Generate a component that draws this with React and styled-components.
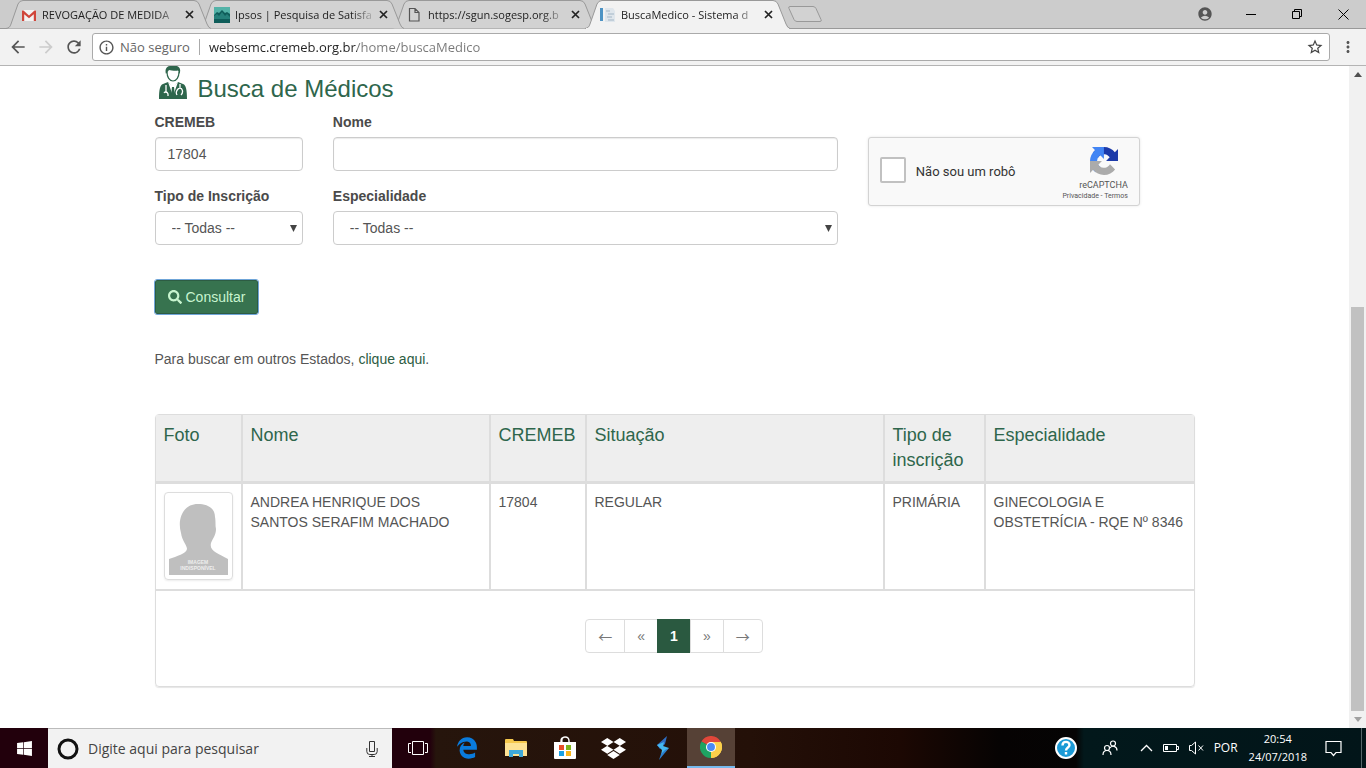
import React from "react";
import styled, { createGlobalStyle } from "styled-components";
import {
  MdAccountCircle,
  MdArrowBack,
  MdArrowForward,
  MdInfoOutline,
  MdMoreVert,
  MdRefresh,
  MdStarBorder,
} from "react-icons/md";
import { FaDropbox, FaEdgeLegacy, FaSearch, FaWindows } from "react-icons/fa";

const tabs = [
  { title: "REVOGAÇÃO DE MEDIDA", icon: GmailIcon },
  { title: "Ipsos | Pesquisa de Satisfa", icon: IpsosIcon },
  { title: "https://sgun.sogesp.org.b", icon: PageIcon },
  { title: "BuscaMedico - Sistema d", icon: ReportIcon, active: true },
];

const doctors = [
  {
    name: "ANDREA HENRIQUE DOS SANTOS SERAFIM MACHADO",
    cremeb: "17804",
    status: "REGULAR",
    type: "PRIMÁRIA",
    specialty: "GINECOLOGIA E OBSTETRÍCIA - RQE Nº 8346",
  },
];

function App() {
  return (
    <Screen>
      <GlobalStyle />
      <TabStrip />
      <AddressBar />
      <Viewport>
        <Page>
          <Container>
            <Heading>
              <DoctorIcon />
              <h1>Busca de Médicos</h1>
            </Heading>
            <SearchForm />
            <Hint>
              Para buscar em outros Estados, <a href="#">clique aqui</a>.
            </Hint>
            <Results />
          </Container>
        </Page>
        <Scrollbar>
          <svg width="17" height="17"><path d="M5 11h8l-4-5z" fill="#505050" /></svg>
          <Thumb />
          <svg width="17" height="17"><path d="M5 6h8l-4 5z" fill="#a0a0a0" /></svg>
        </Scrollbar>
      </Viewport>
      <Taskbar />
    </Screen>
  );
}

export default App;

function TabStrip() {
  return (
    <Strip>
      {tabs.map((tab, i) => (
        <Tab key={tab.title} $order={tab.active ? 10 : tabs.length - i}>
          <TabShape viewBox="0 0 206 29">
            <path
              d="M0 28.5C3 28 4 27 5 24L12 4Q13.5.5 17 .5H188Q191.500.5 193 4L201 24Q202.500 28 205 28.5"
              fill={tab.active ? "#f2f2f2" : "#d2d2d2"}
              stroke="#999"
            />
            {tab.active && <path d="M1 28.5H204" stroke="#f2f2f2" />}
          </TabShape>
          <tab.icon />
          <TabTitle href="#">{tab.title}</TabTitle>
          <TabClose aria-label="Fechar guia">
            <svg width="9" height="9">
              <path d="M1 1l7 7M8 1L1 8" stroke="#222" strokeWidth="1.7" />
            </svg>
          </TabClose>
        </Tab>
      ))}
      <NewTab aria-label="Nova guia">
        <svg width="37" height="18">
          <path d="M3 1.500h23q2 0 3 2l5 11q1 2-1 2H10q-2 0-3-2L2 3.500q-1-2 1-2z" fill="#d2d2d2" stroke="#999" />
        </svg>
      </NewTab>
      <WindowButtons>
        <button aria-label="Usuário"><MdAccountCircle size={16} color="#555" /></button>
        <button aria-label="Minimizar">
          <svg width="11" height="11"><path d="M0 5.500h10" stroke="#000" /></svg>
        </button>
        <button aria-label="Restaurar">
          <svg width="11" height="11" fill="none" stroke="#000">
            <path d="M.5 2.500h7v7h-7zM2.500 2.500v-2h7v7h-2" />
          </svg>
        </button>
        <button aria-label="Fechar">
          <svg width="11" height="11"><path d="M.5.5l10 10M10.500.5l-10 10" stroke="#000" /></svg>
        </button>
      </WindowButtons>
    </Strip>
  );
}

function AddressBar() {
  return (
    <Toolbar>
      <ToolButton aria-label="Voltar"><MdArrowBack size={20} /></ToolButton>
      <ToolButton aria-label="Avançar" disabled><MdArrowForward size={20} /></ToolButton>
      <ToolButton aria-label="Recarregar"><MdRefresh size={20} /></ToolButton>
      <Omnibox>
        <MdInfoOutline size={17} color="#555" />
        <span>Não seguro</span>
        <Divider />
        <UrlInput aria-label="Endereço" defaultValue="websemc.cremeb.org.br/home/buscaMedico" />
        <MdStarBorder size={18} color="#444" />
      </Omnibox>
      <ToolButton aria-label="Menu"><MdMoreVert size={18} /></ToolButton>
    </Toolbar>
  );
}

function SearchForm() {
  return (
    <Form onSubmit={(e) => e.preventDefault()}>
      <Field $span={2}>
        <label htmlFor="cremeb">CREMEB</label>
        <Input id="cremeb" defaultValue="17804" />
      </Field>
      <Field $span={6}>
        <label htmlFor="nome">Nome</label>
        <Input id="nome" />
      </Field>
      <CaptchaCell>
        <Captcha>
          <Check type="checkbox" id="robo" />
          <label htmlFor="robo">Não sou um robô</label>
          <CaptchaBrand>
            <RecaptchaIcon />
            <span>reCAPTCHA</span>
            <small><a href="#">Privacidade</a> - <a href="#">Termos</a></small>
          </CaptchaBrand>
        </Captcha>
      </CaptchaCell>
      <Field $span={2}>
        <label htmlFor="tipo">Tipo de Inscrição</label>
        <Select id="tipo"><option>-- Todas --</option></Select>
      </Field>
      <Field $span={6}>
        <label htmlFor="especialidade">Especialidade</label>
        <Select id="especialidade"><option>-- Todas --</option></Select>
      </Field>
      <Submit type="submit">
        <FaSearch size={14} />
        Consultar
      </Submit>
    </Form>
  );
}

function Results() {
  return (
    <Table>
      <colgroup>
        <col width="85" />
        <col width="248" />
        <col width="96" />
        <col />
        <col width="101" />
        <col width="210" />
      </colgroup>
      <thead>
        <tr>
          <th>Foto</th>
          <th>Nome</th>
          <th>CREMEB</th>
          <th>Situação</th>
          <th>Tipo de inscrição</th>
          <th>Especialidade</th>
        </tr>
      </thead>
      <tbody>
        {doctors.map((d) => (
          <tr key={d.cremeb}>
            <td><Photo><Silhouette /></Photo></td>
            <td>{d.name}</td>
            <td>{d.cremeb}</td>
            <td>{d.status}</td>
            <td>{d.type}</td>
            <td>{d.specialty}</td>
          </tr>
        ))}
      </tbody>
      <tfoot>
        <tr>
          <td colSpan="6">
            <Pagination>
              <PageLink href="#">←</PageLink>
              <PageLink href="#">«</PageLink>
              <PageLink href="#" $current>1</PageLink>
              <PageLink href="#">»</PageLink>
              <PageLink href="#">→</PageLink>
            </Pagination>
          </td>
        </tr>
      </tfoot>
    </Table>
  );
}

function Taskbar() {
  return (
    <Bar>
      <TaskButton aria-label="Iniciar"><FaWindows size={17} /></TaskButton>
      <TaskSearch>
        <svg width="22" height="22"><circle cx="11" cy="11" r="9" fill="none" stroke="#111" strokeWidth="3" /></svg>
        <input aria-label="Pesquisar" placeholder="Digite aqui para pesquisar" />
        <svg width="12" height="18" fill="none" stroke="#333">
          <path d="M3.500 1.500h5v10h-5zM.8 8v3.500q0 3 3 3h4.400q3 0 3-3V8M6 14.500v2M3 16.500h6" />
        </svg>
      </TaskSearch>
      <TaskButton aria-label="Visão de tarefas">
        <svg width="20" height="16" fill="none" stroke="#fff">
          <path d="M4.500 1.500h11v13h-11zM3 3.500H.5v9H3M17 3.500h2.500v9H17" />
        </svg>
      </TaskButton>
      <TaskButton aria-label="Edge"><FaEdgeLegacy size={22} color="#0a7bdc" /></TaskButton>
      <TaskButton aria-label="Explorador de arquivos"><FolderIcon /></TaskButton>
      <TaskButton aria-label="Loja"><StoreIcon /></TaskButton>
      <TaskButton aria-label="Dropbox"><FaDropbox size={25} /></TaskButton>
      <TaskButton aria-label="Sincronizar"><BoltIcon /></TaskButton>
      <TaskButton aria-label="Chrome" $running><ChromeIcon /></TaskButton>
      <Tray>
        <button aria-label="Ajuda">
          <svg width="24" height="24" fill="none">
            <circle cx="12" cy="12" r="10" fill="#1b9ad6" stroke="#fff" strokeWidth="2" />
            <path d="M8.500 9.500c0-5 7-4.500 7-.5 0 2.500-3.500 2.500-3.500 5.500M12 16v2.500" stroke="#fff" strokeWidth="2.400" />
          </svg>
        </button>
        <button aria-label="Pessoas">
          <svg width="16" height="16" fill="none" stroke="#fff" strokeWidth="1.200">
            <circle cx="5" cy="8" r="2.500" />
            <path d="M1 15c0-6 8-6 8 0" />
            <circle cx="11" cy="3.500" r="2.500" />
            <path d="M8 8c2-3 7-2 7 2.500" />
          </svg>
        </button>
        <button aria-label="Mostrar ícones ocultos">
          <svg width="13" height="8" fill="none" stroke="#fff" strokeWidth="1.300"><path d="M1 7l5.500-5.500L12 7" /></svg>
        </button>
        <button aria-label="Bateria">
          <svg width="16" height="10" fill="none" stroke="#fff">
            <path d="M.5 1.500h13v7H.5zM14 3.500h1.500v3H14" />
            <path d="M2 3h3v4H2z" fill="#fff" stroke="none" />
          </svg>
        </button>
        <button aria-label="Volume">
          <svg width="15" height="14" fill="none" stroke="#fff">
            <path d="M.5 4.500h2l4-3.500v12l-4-3.500h-2zM9.500 4.500l4.500 5M14 4.500l-4.500 5" />
          </svg>
        </button>
        <button>POR</button>
        <Clock>
          <span>20:54</span>
          <span>24/07/2018</span>
        </Clock>
        <button aria-label="Notificações">
          <svg width="17" height="17" fill="none" stroke="#fff" strokeWidth="1.200">
            <path d="M1 1.500h15v11h-5l-2.500 3-2.500-3H1z" />
          </svg>
        </button>
      </Tray>
    </Bar>
  );
}

function GmailIcon() {
  return (
    <svg width="16" height="16">
      <path d="M1 3h14v11H1z" fill="#f3f3f3" />
      <path d="M1 14V3.500h1.500L8 8.500l5.500-5H15V14h-2.200V7.200L8 11.300 3.200 7.200V14z" fill="#d0463b" />
    </svg>
  );
}

function IpsosIcon() {
  return (
    <svg width="16" height="16">
      <path d="M0 0h16v16H0z" fill="#0f5d5a" />
      <path d="M0 0h16v7l-3-2-2 1-3-3-3 3-2-1-3 3z" fill="#54b3a8" />
      <path d="M0 9l3-2 2 2 3-4 3 4 2-2 3 3v2H0z" fill="#25807a" />
    </svg>
  );
}

function PageIcon() {
  return (
    <svg width="16" height="16" fill="none" stroke="#555" strokeWidth="1.200">
      <path d="M2.500 1.500h5.500l4 4v8.500h-9.500zM8 1.500v4h4" />
    </svg>
  );
}

function ReportIcon() {
  return (
    <svg width="16" height="16">
      <path d="M0 1h3v13H0z" fill="#4d93c4" />
      <path d="M5 1h8l2 3v11H5z" fill="#dfe6ec" />
      <path d="M6 4h4M8 7h6M7 10h5M8 13h6" stroke="#a3b6c6" />
    </svg>
  );
}

function DoctorIcon() {
  return (
    <svg width="28" height="33" viewBox="0 0 28 33">
      <path d="M8 6c0 5 2.500 9 6 9s6-4 6-9" fill="#fff" stroke="#2e664c" strokeWidth="1.200" />
      <path d="M7 8C5.500 3 8 0 11 0h7c3 1 4 4 2.500 8L19 4.500c-3 1-7-.5-9-.5z" fill="#2e664c" />
      <path d="M0 33c0-9 1-14 4-15l5-2 5 6 5-6 5 2c3 1 4 6 4 15z" fill="#2e664c" />
      <path d="M9 16l5 14 5-14-5 5z" fill="#fff" />
      <path d="M13 21h2l1 9-2 2-2-2z" fill="#2e664c" />
      <path d="M7 19v8M5 27q2-3 4 1v2M21 18v4M18 29c-2-3 1-7 3-7s4 4 1 7" fill="none" stroke="#fff" strokeWidth="1.300" />
    </svg>
  );
}

function RecaptchaIcon() {
  return (
    <svg width="28" height="28" viewBox="0 0 64 64">
      <path d="M64 31.955l-.033-1.370V4.687l-7.160 7.160C50.948 4.674 42.033.093 32.050.093c-10.400 0-19.622 4.960-25.458 12.640l11.736 11.860a15.550 15.550 0 0 1 4.754-5.334c2.050-1.600 4.952-2.906 8.968-2.906.485 0 .86.057 1.135.163 4.976.393 9.288 3.140 11.828 7.124l-8.307 8.307L64 31.953" fill="#1c3aa9" />
      <path d="M31.862.094l-1.370.033H4.594l7.160 7.160C4.580 13.147 0 22.060 0 32.046c0 10.400 4.960 19.622 12.640 25.458L24.500 45.768a15.550 15.550 0 0 1-5.334-4.754c-1.600-2.050-2.906-4.952-2.906-8.968 0-.485.057-.86.163-1.135.393-4.976 3.140-9.288 7.124-11.828l8.307 8.307L31.860.095" fill="#4285f4" />
      <path d="M.001 32.045l.033 1.370v25.898l7.160-7.160c5.860 7.173 14.774 11.754 24.760 11.754 10.400 0 19.622-4.960 25.458-12.640l-11.736-11.860a15.550 15.550 0 0 1-4.754 5.334c-2.050 1.600-4.952 2.906-8.968 2.906-.485 0-.86-.057-1.135-.163-4.976-.393-9.288-3.140-11.828-7.124l8.307-8.307L0 32.047" fill="#ababab" />
    </svg>
  );
}

function Silhouette() {
  return (
    <svg width="59" height="78" viewBox="0 0 59 78">
      <path d="M0 78V62c8-3 17-5 18-10 0-4-5-8-6-16-4-14 2-29 17-29 8 0 17 3 17 13 1 5 0 8 1 12 0 6-3 9-5 14-2 8 7 10 17 16v16z" fill="#bfbfbf" />
      <text x="29" y="67" fontSize="5" fontWeight="bold" textAnchor="middle" fill="#eee">IMAGEM</text>
      <text x="29" y="73" fontSize="5" fontWeight="bold" textAnchor="middle" fill="#eee">INDISPONÍVEL</text>
    </svg>
  );
}

function FolderIcon() {
  return (
    <svg width="22" height="20">
      <path d="M0 2q0-1 1-1h7l1 2h12q1 0 1 1v14H0z" fill="#f5c84c" />
      <path d="M0 5h22v13H0z" fill="#fde294" />
      <path d="M4 19v-7h14v7h-4v-3H8v3z" fill="#3fa9d9" />
    </svg>
  );
}

function StoreIcon() {
  return (
    <svg width="24" height="24">
      <path d="M8 7V5q0-3 2.500-3.500M16 7V5q0-4-4-4t-3 6" fill="none" stroke="#fff" strokeWidth="1.400" />
      <path d="M1 6h22v16q0 1-1 1H2q-1 0-1-1z" fill="#fff" />
      <path d="M6 9h5v5H6z" fill="#e8502a" />
      <path d="M13 9h5v5h-5z" fill="#7fb51b" />
      <path d="M6 15h5v5H6z" fill="#18a0e4" />
      <path d="M13 15h5v5h-5z" fill="#f8b51c" />
    </svg>
  );
}

function BoltIcon() {
  return (
    <svg width="14" height="24">
      <path d="M11 0L1 9l3 4 5-5z" fill="#2f6fc4" />
      <path d="M1 9l7-3-1 4 6 2-8 7 1-5z" fill="#45b8ef" />
      <path d="M13 12L3 24l2-6 4-4z" fill="#2b7fcf" />
    </svg>
  );
}

function ChromeIcon() {
  return (
    <svg width="22" height="22" viewBox="0 0 24 24">
      <path d="M12 12L1.600 6A12 12 0 0 1 22.400 6z" fill="#e0473a" />
      <path d="M12 12l10.400-6A12 12 0 0 1 12 24z" fill="#fcd04b" />
      <path d="M12 12v0L12 24A12 12 0 0 1 1.600 6z" fill="#1ea362" />
      <path d="M12 6.500h10.700A12 12 0 0 1 12 24l5-9z" fill="#fcd04b" />
      <circle cx="12" cy="12" r="5.500" fill="#fff" />
      <circle cx="12" cy="12" r="4.300" fill="#4a8af4" />
    </svg>
  );
}

const GlobalStyle = createGlobalStyle`
  * {
    box-sizing: border-box;
  }

  body {
    margin: 0;
    font-family: "Liberation Sans", Arial, sans-serif;
    font-size: 14px;
    line-height: 20px;
    color: #555;
    background: #fff;
  }

  button, input, select {
    font: inherit;
    color: inherit;
  }

  button {
    display: flex;
    align-items: center;
    justify-content: center;
    padding: 0;
    border: 0;
    background: none;
  }

  a {
    color: #2d5c43;
    text-decoration: none;
  }

  svg {
    display: block;
    flex-shrink: 0;
  }
`;

const Screen = styled.div`
  display: flex;
  flex-direction: column;
  min-height: 100vh;
`;

const Strip = styled.header`
  display: flex;
  height: 29px;
  padding-left: 6px;
  background: #ccc;
  border-bottom: 1px solid #999;
  font-family: "Open Sans", "Noto Sans", sans-serif;
  font-size: 11px;
`;

const Tab = styled.div`
  position: relative;
  z-index: ${(p) => p.$order};
  display: flex;
  align-items: center;
  gap: 5px;
  width: 205px;
  height: 29px;
  margin-right: -12px;
  padding: 0 14px 0 15px;
  color: #222;
`;

const TabShape = styled.svg`
  position: absolute;
  inset: 0;
  z-index: -1;
  width: 206px;
  height: 29px;
  fill: none;
`;

const TabTitle = styled.a`
  flex: 1;
  white-space: nowrap;
  color: #222;
  mask-image: linear-gradient(to right, #000 85%, rgba(0, 0, 0, 0.2));
`;

const TabClose = styled.button`
  width: 16px;
  height: 16px;
`;

const NewTab = styled.button`
  align-self: center;
  margin-left: 9px;
`;

const WindowButtons = styled.div`
  display: flex;
  margin-left: auto;

  button {
    width: 46px;
  }
`;

const Toolbar = styled.div`
  display: flex;
  align-items: center;
  gap: 8px;
  height: 37px;
  padding: 0 8px;
  background: #f2f2f2;
  border-bottom: 1px solid #b4b4b4;
`;

const ToolButton = styled.button`
  width: 20px;
  color: #555;

  &:disabled {
    color: #ccc;
  }
`;

const Omnibox = styled.div`
  display: flex;
  align-items: center;
  flex: 1;
  height: 28px;
  padding: 0 5px;
  gap: 5px;
  background: #fff;
  border: 1px solid #aaa;
  border-radius: 3px;
  font-family: "Open Sans", "Noto Sans", sans-serif;
  font-size: 13px;
  color: #666;
`;

const Divider = styled.span`
  width: 1px;
  height: 16px;
  margin: 0 4px;
  background: #aaa;
`;

/* host part of the address is darker than the path */
const UrlInput = styled.input`
  flex: 1;
  min-width: 0;
  padding: 0;
  border: 0;
  outline: 0;
  background: linear-gradient(to right, #222 148px, #777 148px);
  background-clip: text;
  -webkit-text-fill-color: transparent;
`;

const Viewport = styled.main`
  display: flex;
  flex: 1;
`;

const Page = styled.div`
  flex: 1;
  padding: 0 15px 40px;
`;

const Container = styled.div`
  max-width: 1040px;
  margin: 0 auto;
`;

const Heading = styled.div`
  display: flex;
  align-items: flex-start;
  gap: 11px;
  padding-left: 4px;
  height: 46px;
  color: #2e664c;

  h1 {
    margin: 8px 0 0;
    font-size: 24px;
    line-height: 30px;
    font-weight: 400;
  }
`;

const Form = styled.form`
  display: grid;
  grid-template-columns: repeat(12, 1fr);
  column-gap: 30px;
  row-gap: 15px;
`;

const Field = styled.div`
  grid-column: span ${(p) => p.$span};
  display: flex;
  flex-direction: column;
  gap: 5px;

  label {
    font-weight: 700;
    color: #4a4a4a;
  }
`;

const Input = styled.input`
  width: 100%;
  height: 34px;
  padding: 6px 12px;
  border: 1px solid #ccc;
  border-radius: 4px;
  background: #fff;
  box-shadow: inset 0 1px 1px rgba(0, 0, 0, 0.08);
`;

const arrow = "data:image/svg+xml,%3Csvg xmlns='http://www.w3.org/2000/svg' width='7' height='7'%3E%3Cpath d='M0 0h7L3.500 7z' fill='%23444'/%3E%3C/svg%3E";

const Select = styled.select`
  width: 100%;
  height: 34px;
  padding: 6px 16px;
  border: 1px solid #ccc;
  border-radius: 4px;
  appearance: none;
  background: #fff url("${arrow}") no-repeat right 5px center;
`;

const CaptchaCell = styled.div`
  grid-column: span 4;
  grid-row: span 2;
  padding-top: 25px;
`;

const Captcha = styled.div`
  display: flex;
  align-items: center;
  width: 272px;
  height: 69px;
  padding: 0 11px;
  background: #f9f9f9;
  border: 1px solid #d3d3d3;
  border-radius: 3px;
  box-shadow: 0 0 3px rgba(0, 0, 0, 0.1);
  font-family: Roboto, sans-serif;
  font-size: 13px;
  color: #333;
`;

const Check = styled.input`
  appearance: none;
  width: 26px;
  height: 26px;
  margin: 0 10px 4px 0;
  border: 2px solid #c1c1c1;
  border-radius: 2px;
  background: #fff;
`;

const CaptchaBrand = styled.div`
  display: flex;
  flex-direction: column;
  align-items: flex-end;
  margin-left: auto;
  padding-top: 4px;
  font-size: 9px;
  line-height: 12px;
  color: #555;

  svg {
    margin: 0 10px 4px;
  }

  small {
    font-size: 7px;
    line-height: 10px;
  }

  a {
    color: inherit;
  }
`;

const Submit = styled.button`
  grid-column: 1 / -1;
  justify-self: start;
  gap: 4px;
  height: 34px;
  margin-top: 20px;
  padding: 0 12px;
  background: #37734f;
  border: 1px solid #2d5c43;
  border-radius: 2px;
  outline: 1px solid #6fa5d8;
  color: #c8f5cf;
`;

const Hint = styled.p`
  margin: 35px 0 45px;
`;

const Table = styled.table`
  width: 100%;
  table-layout: fixed;
  border: 1px solid #ddd;
  border-radius: 4px;
  border-spacing: 0;
  box-shadow: 0 1px 1px rgba(0, 0, 0, 0.1);

  th, td {
    padding: 8px;
    text-align: left;
    vertical-align: top;
    border-bottom: 2px solid #ddd;
  }

  th + th, td + td {
    border-left: 2px solid #ddd;
  }

  th {
    height: 69px;
    border-bottom-width: 3px;
    background: #eee;
    color: #2e664c;
    font-size: 18px;
    line-height: 25px;
    font-weight: 400;
  }

  tfoot td {
    padding: 28px 8px 33px;
    border-bottom: 0;
  }
`;

const Photo = styled.div`
  width: 69px;
  height: 88px;
  margin-bottom: 1px;
  padding: 4px;
  border: 1px solid #ddd;
  border-radius: 4px;
  box-shadow: 0 1px 2px rgba(0, 0, 0, 0.08);
`;

const Pagination = styled.nav`
  display: flex;
  justify-content: center;
`;

const PageLink = styled.a`
  padding: 6px 12px;
  margin-left: -1px;
  border: 1px solid ${(p) => (p.$current ? "#2a5940" : "#ddd")};
  background: ${(p) => (p.$current ? "#2a5940" : "#fff")};
  color: ${(p) => (p.$current ? "#fff" : "#777")};
  font-weight: ${(p) => (p.$current ? 700 : 400)};

  &:first-child, &:last-child {
    font-family: "Noto Sans CJK JP", sans-serif;
  }

  &:first-child {
    border-radius: 4px 0 0 4px;
  }

  &:last-child {
    border-radius: 0 4px 4px 0;
  }
`;

const Scrollbar = styled.div`
  display: flex;
  flex-direction: column;
  width: 17px;
  background: #f1f1f1;
`;

const Thumb = styled.div`
  height: 61%;
  margin: auto 2px 0;
  background: #c1c1c1;
`;

const Bar = styled.footer`
  display: flex;
  height: 40px;
  color: #fff;
  background: linear-gradient(75deg, #22000c 0 432px, #26150c 434px, #241008 750px, #1c0803 900px, #060303 1000px, #050404 1040px, #02181b 1042px, #021519);
  background: linear-gradient(to right, #22000c 0 430px, #26150c 436px, #241008 750px, #1c0803 900px, #060303 1000px, #050404 1076px, #02181b 1084px, #021519);
  font-family: "Open Sans", "Noto Sans", sans-serif;
  font-size: 12px;
`;

const TaskButton = styled.button`
  width: ${(p) => (p.$running ? 48 : 49)}px;
  background: ${(p) => (p.$running ? "#564136" : "none")};
  border-bottom: ${(p) => (p.$running ? "2px solid #76b9ed" : "0")};

  &:first-child {
    width: 48px;
  }
`;

const TaskSearch = styled.div`
  display: flex;
  align-items: center;
  width: 344px;
  margin-right: 1px;
  padding: 0 14px 0 9px;
  gap: 9px;
  background: #f2f2f2;
  border-top: 1px solid #bbb;
  color: #444;
  font-size: 14px;

  input {
    flex: 1;
    border: 0;
    padding: 0;
    background: none;
  }

  input::placeholder {
    color: #444;
  }
`;

const Tray = styled.div`
  display: flex;
  align-items: center;
  gap: 10px;
  margin-left: auto;
  margin-right: 4px;
  padding-right: 19px;
  border-right: 1px solid #55676a;

  button:first-child {
    margin-right: 14px;
  }

  button:nth-child(2) {
    margin-right: 12px;
  }

  button:last-child {
    margin-left: 8px;
  }
`;

const Clock = styled.div`
  display: flex;
  flex-direction: column;
  align-items: center;
  margin-left: 1px;
  font-size: 11px;
  line-height: 18px;
`;
